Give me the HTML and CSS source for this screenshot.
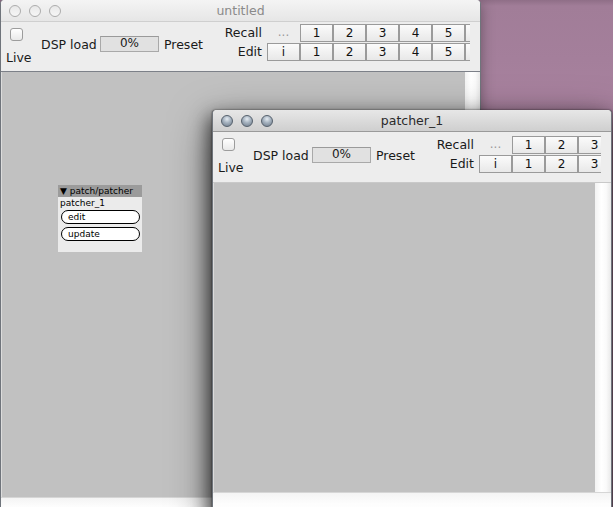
FILE: index.html
```html
<!DOCTYPE html>
<html>
<head>
<meta charset="utf-8">
<link rel="stylesheet" href="styles.css">
</head>
<body>
<div class="desktop">
  <div class="window win-main inactive">
    <div class="titlebar">
      <div class="lights"><span class="light"></span><span class="light"></span><span class="light"></span></div>
      <div class="title">untitled</div>
    </div>
    <div class="toolbar">
      <div class="live"><span class="checkbox"></span><span class="live-label">Live</span></div>
      <div class="dsp">
        <span class="dsp-label">DSP load</span>
        <span class="dsp-box">0%</span>
        <span class="preset-label">Preset</span>
      </div>
      <div class="presets-clip">
        <div class="presets presets-6">
          <span class="plabel">Recall</span><span class="cell dots">...</span><span class="cell">1</span><span class="cell">2</span><span class="cell">3</span><span class="cell">4</span><span class="cell">5</span><span class="cell"></span>
          <span class="plabel">Edit</span><span class="cell">i</span><span class="cell">1</span><span class="cell">2</span><span class="cell">3</span><span class="cell">4</span><span class="cell">5</span><span class="cell"></span>
        </div>
      </div>
    </div>
    <div class="body">
      <div class="canvas canvas-main">
        <div class="patch">
          <div class="patch-head">▼ patch/patcher</div>
          <div class="patch-name">patcher_1</div>
          <div class="patch-btn">edit</div>
          <div class="patch-btn second">update</div>
        </div>
      </div>
      <div class="vscroll"></div>
    </div>
    <div class="hscroll"></div>
  </div>

  <div class="window win-sub active">
    <div class="titlebar">
      <div class="lights"><span class="light"></span><span class="light"></span><span class="light"></span></div>
      <div class="title">patcher_1</div>
    </div>
    <div class="toolbar">
      <div class="live"><span class="checkbox"></span><span class="live-label">Live</span></div>
      <div class="dsp">
        <span class="dsp-label">DSP load</span>
        <span class="dsp-box">0%</span>
        <span class="preset-label">Preset</span>
      </div>
      <div class="presets-clip">
        <div class="presets presets-3">
          <span class="plabel">Recall</span><span class="cell dots">...</span><span class="cell">1</span><span class="cell">2</span><span class="cell">3</span>
          <span class="plabel">Edit</span><span class="cell">i</span><span class="cell">1</span><span class="cell">2</span><span class="cell">3</span>
        </div>
      </div>
    </div>
    <div class="body">
      <div class="canvas canvas-sub"></div>
      <div class="vscroll"></div>
    </div>
    <div class="hscroll"></div>
  </div>
</div>
</body>
</html>
```

FILE: styles.css
```css
html, body {
  margin: 0;
  padding: 0;
}
body {
  width: 613px;
  height: 507px;
  overflow: hidden;
  font-family: "DejaVu Sans", "Liberation Sans", sans-serif;
  font-size: 12.5px;
  color: #1a1a1a;
}
.desktop {
  position: relative;
  width: 613px;
  height: 507px;
  overflow: hidden;
  background: linear-gradient(180deg, #8f6e87 0px, #a17d98 6px, #a47f9b 60px, #a9829f 110px);
}
.window {
  position: absolute;
  display: flex;
  flex-direction: column;
  background: #ececec;
  border-left: 1px solid #6f747b;
  border-right: 1px solid #6f747b;
  border-radius: 4px 4px 0 0;
}
.win-main {
  left: 0;
  top: 0;
  width: 479px;
  height: 520px;
  box-shadow: 0 3px 14px rgba(0, 0, 0, 0.35);
}
.win-sub {
  left: 212px;
  top: 110px;
  width: 398px;
  height: 410px;
  box-shadow: -3px 6px 18px rgba(0, 0, 0, 0.6), 0 14px 42px rgba(0, 0, 0, 0.55), 0 0 2px rgba(0, 0, 0, 0.7);
}
.titlebar {
  position: relative;
  height: 21px;
  flex: none;
  border-bottom: 1px solid #b4b4b4;
  border-radius: 4px 4px 0 0;
  display: flex;
  align-items: center;
}
.inactive .titlebar {
  background: linear-gradient(180deg, #f4f4f4, #e6e6e6);
  border-bottom-color: #cfcfcf;
}
.active .titlebar {
  background: linear-gradient(180deg, #e7e7e7, #cfcfcf);
  border-bottom-color: #9a9a9a;
}
.lights {
  display: flex;
  gap: 8px;
  padding-left: 8px;
}
.light {
  width: 12px;
  height: 12px;
  border-radius: 50%;
  box-sizing: border-box;
}
.inactive .light {
  background: linear-gradient(180deg, #e8e8e8, #f6f6f6);
  border: 1px solid #acacac;
}
.active .light {
  background: radial-gradient(circle at 50% 30%, #e4ebf2 0%, #a4b1be 45%, #6c7988 100%);
  border: 1px solid #56616d;
}
.title {
  position: absolute;
  left: 0;
  right: 0;
  top: 0;
  line-height: 21px;
  text-align: center;
  font-size: 12.5px;
}
.inactive .title { color: #8a8a8a; }
.active .title { color: #2a2a2a; }

.toolbar {
  height: 49px;
  flex: none;
  display: flex;
  align-items: flex-start;
  padding-left: 5px;
  padding-right: 10px;
  background: #ededed;
  overflow: hidden;
}
.active .toolbar {
  height: 50px;
}
.live {
  width: 35px;
  flex: none;
  display: flex;
  flex-direction: column;
  align-items: flex-start;
  padding-top: 6px;
}
.checkbox {
  width: 13px;
  height: 13px;
  margin-left: 4px;
  box-sizing: border-box;
  border: 1px solid #9c9c9c;
  border-radius: 3px;
  background: linear-gradient(180deg, #ffffff, #e9e9e9);
}
.live-label {
  margin-top: 9px;
  line-height: 15px;
}
.dsp {
  flex: none;
  display: flex;
  align-items: center;
  height: 16px;
  margin-top: 14px;
}
.active .dsp {
  margin-top: 15px;
}
.dsp-label {
  width: 59px;
}
.dsp-box {
  width: 59px;
  height: 16px;
  box-sizing: border-box;
  border: 1px solid #a9a9a9;
  border-top-color: #9a9a9a;
  background: #e1e1e1;
  text-align: center;
  line-height: 13px;
  font-size: 12px;
}
.preset-label {
  width: 46px;
  padding-left: 5px;
  padding-right: 1px;
}
.presets-clip {
  flex: 1;
  min-width: 0;
  overflow: hidden;
  margin-top: 2px;
}
.active .presets-clip {
  margin-top: 4px;
}
.presets {
  display: grid;
  grid-auto-rows: 18px;
  row-gap: 1px;
  width: max-content;
}
.presets-6 {
  grid-template-columns: 56px repeat(7, 33px);
}
.presets-3 {
  grid-template-columns: 56px repeat(4, 33px);
}
.plabel {
  text-align: right;
  padding-right: 5px;
  line-height: 18px;
}
.cell {
  box-sizing: border-box;
  border: 1px solid #9a9a9a;
  background: linear-gradient(180deg, #fbfbfb, #e8e8e8);
  text-align: center;
  line-height: 16px;
  font-size: 12px;
  color: #111;
}
.cell.dots {
  border-color: transparent;
  background: none;
  color: #9a9a9a;
  line-height: 14px;
}

.body {
  flex: none;
  display: flex;
  border-top: 1px solid #7c8088;
  padding-left: 1px;
  background: #dcdcdc;
}
.active .body {
  border-top-color: #c9c9c9;
}
.canvas {
  position: relative;
  flex: 1;
  background: #c1c1c1;
}
.canvas-main { height: 425px; }
.canvas-sub { height: 309px; }
.vscroll {
  width: 15px;
  flex: none;
  background: linear-gradient(90deg, #f2f2f2, #ffffff 40%, #fafafa 70%, #e9e9e9);
}
.active .vscroll { width: 16px; }
.hscroll {
  flex: 1;
  border-top: 1px solid #d6d6d6;
  background: linear-gradient(180deg, #f4f4f4, #fdfdfd 40%, #ffffff);
}

.patch {
  position: absolute;
  left: 56px;
  top: 113px;
  width: 84px;
  background: #ebebeb;
  padding-bottom: 11px;
  font-family: "DejaVu Sans", sans-serif;
  font-size: 9px;
  color: #000;
}
.patch-head {
  background: #9b9b9b;
  height: 12px;
  line-height: 12px;
  padding-left: 2px;
}
.patch-name {
  height: 12px;
  line-height: 12px;
  padding-left: 2px;
}
.patch-btn {
  margin: 1px 2px 0 3px;
  height: 12px;
  line-height: 12px;
  border: 1.5px solid #000;
  border-radius: 8px;
  background: #fff;
  padding-left: 6px;
}
.patch-btn.second {
  margin-top: 3px;
}
```
